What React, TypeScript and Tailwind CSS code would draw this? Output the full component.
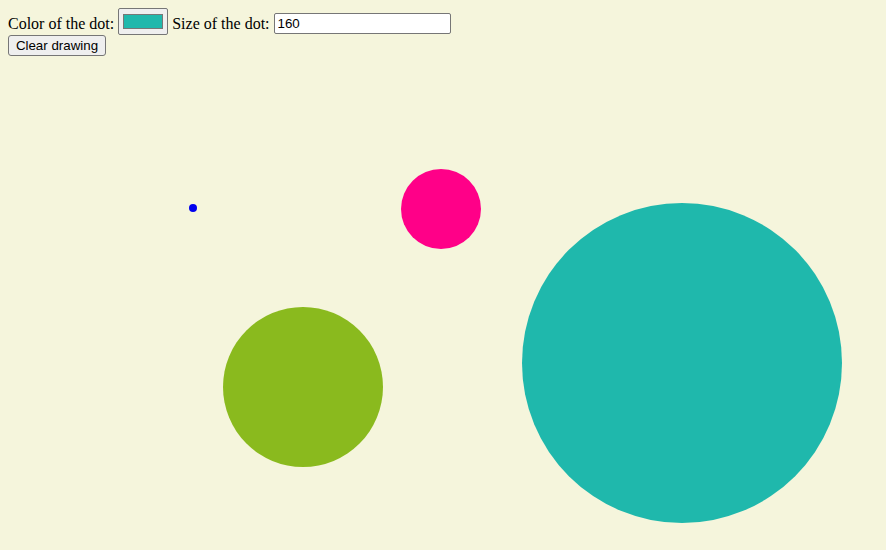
import React from "react";

const dots = [
  { x: 193, y: 208, r: 4, c: "#0000ee" },
  { x: 441, y: 209, r: 40, c: "#ff0088" },
  { x: 303, y: 387, r: 80, c: "#8aba1e" },
  { x: 682, y: 363, r: 160, c: "#1fb8ac" },
];

export default function App() {
  return (
    <div className="relative w-[886px] h-[550px] overflow-hidden bg-[#f5f5dc] p-2 text-[16px] text-black" style={{ fontFamily: '"Liberation Serif", "Times New Roman", serif' }}>
      <div className="flex items-end h-[27px]">
        <span className="leading-[18px] mb-[2px]">Color of the dot:</span>
        <div className="ml-[4px] w-[50px] h-[27px] border border-[#767676] bg-[#efefef] rounded-[2px] flex items-center justify-center">
          <div className="w-[40px] h-[15px] border border-[#777777] bg-[#20b8ac]" />
        </div>
        <span className="ml-[4px] leading-[18px] mb-[2px]">Size of the dot:</span>
        <input
          readOnly
          value="160"
          className="ml-[4px] mb-[1px] w-[177px] h-[21px] border border-[#767676] rounded-[2px] bg-white px-[3px] text-[13.33px] outline-none"
          style={{ fontFamily: '"Liberation Sans", Arial, sans-serif' }}
        />
      </div>
      <button
        className="block w-[98px] h-[21px] border border-[#767676] rounded-[3px] bg-[#efefef] text-[13.33px] leading-none text-black"
        style={{ fontFamily: '"Liberation Sans", Arial, sans-serif' }}
      >
        Clear drawing
      </button>
      {dots.map((d, i) => (
        <div
          key={i}
          className="absolute rounded-full"
          style={{ left: d.x - d.r, top: d.y - d.r, width: d.r * 2, height: d.r * 2, backgroundColor: d.c }}
        />
      ))}
    </div>
  );
}
